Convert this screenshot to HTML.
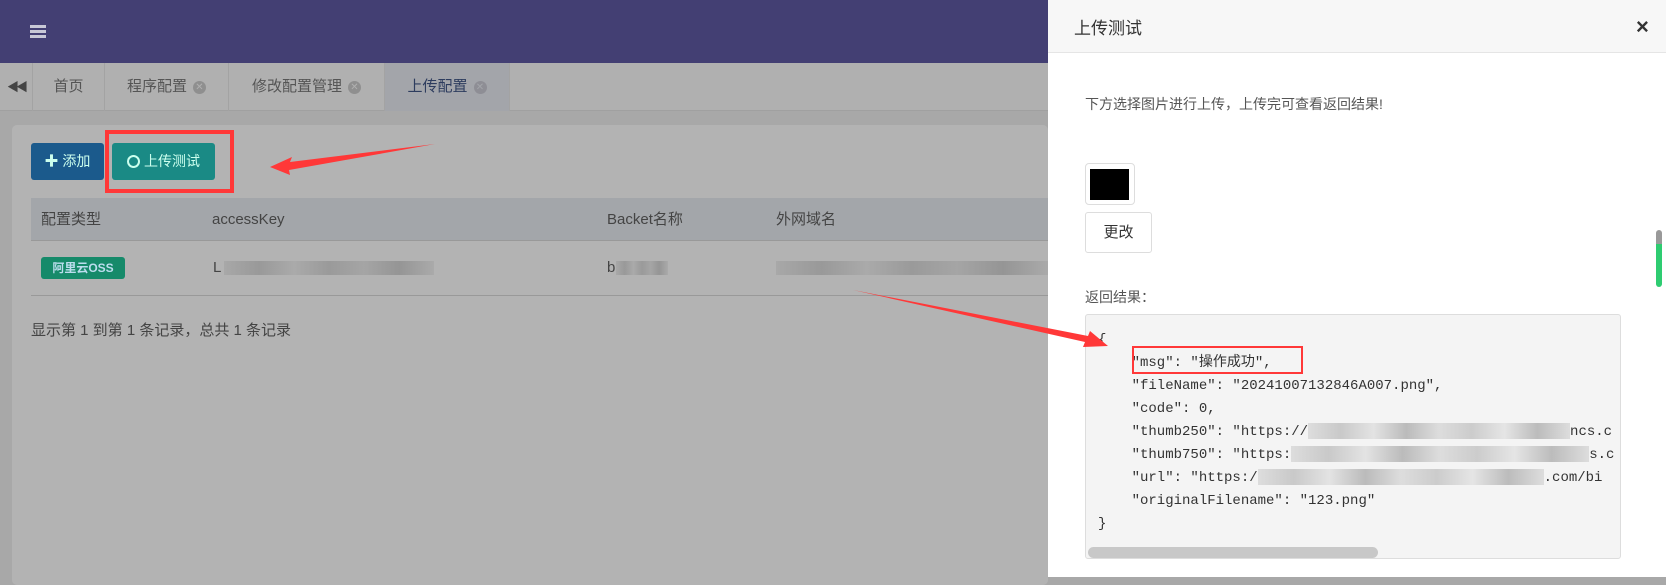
<!DOCTYPE html>
<html><head><meta charset="utf-8"><style>
*{margin:0;padding:0;box-sizing:border-box}
body{width:1666px;height:577px;overflow:hidden;position:relative;background:#a8a8a8;font-family:"Liberation Sans","Noto Sans CJK SC",sans-serif;font-size:14px;color:#444}
.abs{position:absolute}
.hdr{left:0;top:0;width:1048px;height:63px;background:#433f73}
.tabs{left:0;top:63px;width:1048px;height:48px;background:#b0b0b0;border-bottom:1px solid #a0a0a0}
.tab{position:absolute;top:0;height:48px;line-height:48px;font-size:15px;color:#555;border-right:1px solid #a3a3a3;text-align:center}
.x{display:inline-block;width:13px;height:13px;border-radius:50%;background:#8f8f8f;color:#b0b0b0;font-size:10px;line-height:13px;text-align:center;margin-left:6px;vertical-align:1px}
.card{left:12px;top:125px;width:1036px;height:460px;background:#b3b3b3;border-radius:5px}
.btn{position:absolute;top:143px;height:37px;line-height:37px;color:#cfe;font-size:14px;border-radius:3px}
.th{left:31px;top:198px;width:1017px;height:43px;background:#a3a6aa;border-bottom:1px solid #999;font-size:15px;color:#444;line-height:43px}
.blur{position:absolute;height:14px;background:linear-gradient(90deg,#a8a8a8,#999,#aaa,#9a9a9a,#a5a5a5,#959595,#aaa)}
.panel{left:1048px;top:0;width:618px;height:577px;background:#fff}
.code{font-family:"Liberation Mono","Noto Sans CJK SC",monospace;font-size:14px;color:#333;white-space:pre;line-height:23px}
.cblur{display:inline-block;height:16px;vertical-align:middle;background:linear-gradient(90deg,#ddd,#c9c9c9,#e3e3e3,#bbb,#ddd,#ccc,#e5e5e5,#bcbcbc,#ddd)}
</style></head><body>
<div class="abs hdr"></div>
<div class="abs" style="left:30px;top:25px;width:16px;height:3px;background:#c8c8d6;box-shadow:0 5px 0 #c8c8d6,0 10px 0 #c8c8d6"></div>
<div class="abs tabs">
 <div class="tab" style="left:0;width:33px;color:#444;font-size:12px;letter-spacing:-3px">&#9664;&#9664;</div>
 <div class="tab" style="left:33px;width:72px">首页</div>
 <div class="tab" style="left:105px;width:124px">程序配置<span class="x">✕</span></div>
 <div class="tab" style="left:229px;width:156px">修改配置管理<span class="x">✕</span></div>
 <div class="tab" style="left:385px;width:125px;background:#a3a5aa;color:#2d3c5e">上传配置<span class="x" style="background:#8e8e95;color:#a3a5aa">✕</span></div>
</div>
<div class="abs card"></div>
<div class="btn" style="left:31px;width:73px;background:#1b5a8c;text-align:center">✚ 添加</div>
<div class="btn" style="left:112px;width:103px;background:#1a8a85;text-align:center"><span style="display:inline-block;width:13px;height:13px;border:2px solid #cfe;border-radius:50%;vertical-align:-2px;margin-right:4px"></span>上传测试</div>
<div class="abs" style="left:105px;top:130px;width:129px;height:63px;border:4px solid #ff3838"></div>
<div class="abs th"><span class="abs" style="left:10px">配置类型</span><span class="abs" style="left:181px">accessKey</span><span class="abs" style="left:576px">Backet名称</span><span class="abs" style="left:745px">外网域名</span></div>
<div class="abs" style="left:41px;top:257px;width:84px;height:22px;background:#168a6a;color:#bde;font-size:12px;line-height:22px;text-align:center;border-radius:3px;font-weight:bold">阿里云OSS</div>
<div class="abs" style="left:213px;top:259px;font-size:15px">L</div>
<div class="blur" style="left:224px;top:261px;width:210px"></div>
<div class="abs" style="left:607px;top:259px;font-size:15px">b</div>
<div class="blur" style="left:616px;top:261px;width:52px"></div>
<div class="blur" style="left:776px;top:261px;width:272px"></div>
<div class="abs" style="left:31px;top:295px;width:1017px;height:1px;background:#999"></div>
<div class="abs" style="left:31px;top:319px;font-size:15px;color:#444">显示第 1 到第 1 条记录，总共 1 条记录</div>

<div class="abs panel">
 <div class="abs" style="left:0;top:0;width:618px;height:53px;background:#f7f7f7;border-bottom:1px solid #e5e5e5"></div>
 <div class="abs" style="left:26px;top:14px;font-size:17px;color:#333">上传测试</div>
 <div class="abs" style="left:588px;top:14px;font-size:22px;color:#333;font-weight:bold">×</div>
 <div class="abs" style="left:37px;top:94px;font-size:14px;color:#555">下方选择图片进行上传，上传完可查看返回结果!</div>
 <div class="abs" style="left:37px;top:163px;width:50px;height:42px;border:1px solid #ddd;border-radius:4px"><div class="abs" style="left:4px;top:5px;width:39px;height:31px;background:#000"></div></div>
 <div class="abs" style="left:37px;top:212px;width:67px;height:41px;border:1px solid #ddd;border-radius:3px;font-size:15px;line-height:39px;text-align:center;color:#333">更改</div>
 <div class="abs" style="left:37px;top:287px;font-size:14px;color:#555">返回结果：</div>
 <div class="abs" style="left:37px;top:314px;width:536px;height:245px;background:#f4f4f4;border:1px solid #ddd;border-radius:3px;overflow:hidden">
  <div class="abs code" style="left:12px;top:14px">{
    "msg": "操作成功",
    "fileName": "20241007132846A007.png",
    "code": 0,
    "thumb250": "https://<span class="cblur" style="width:262px"></span>ncs.c
    "thumb750": "https:<span class="cblur" style="width:298px"></span>s.c
    "url": "https:/<span class="cblur" style="width:286px"></span>.com/bi
    "originalFilename": "123.png"
}</div>
  <div class="abs" style="left:2px;top:232px;width:290px;height:11px;background:#c8c8c8;border-radius:6px"></div>
 </div>
 <div class="abs" style="left:84px;top:346px;width:171px;height:28px;border:2px solid #ff3838"></div>
 <div class="abs" style="left:608px;top:230px;width:6px;height:57px;border-radius:3px;background:linear-gradient(#999 0 25%,#2ecc71 25%)"></div>
</div>
<svg class="abs" style="left:0;top:0;z-index:5" width="1666" height="577"><polygon points="435,144 290,162 292,157 270,167 290,175 289,170" fill="#ff3838"/><polygon points="853,290 1085,342 1083,347 1108,346 1090,331 1088,336" fill="#ff3838"/></svg>
</body></html>
